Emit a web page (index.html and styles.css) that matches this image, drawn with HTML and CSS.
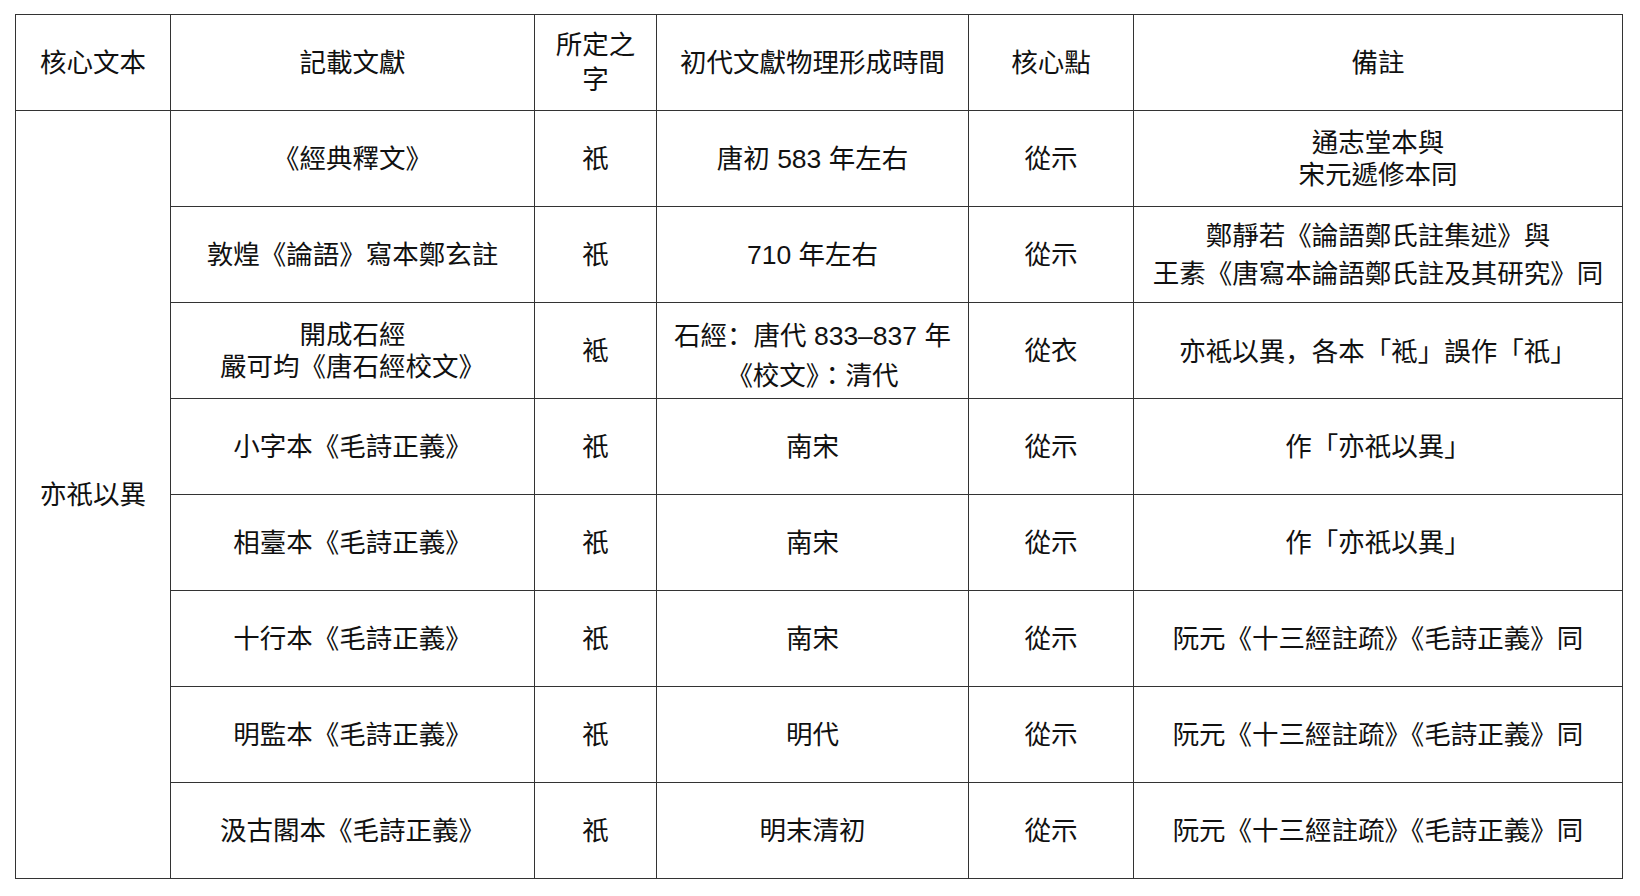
FILE: index.html
```html
<!DOCTYPE html>
<html lang="zh-Hant">
<head>
<meta charset="utf-8">
<title>亦祇以異</title>
<link rel="stylesheet" href="styles.css">
</head>
<body>
<table class="grid">
  <colgroup>
    <col class="c1">
    <col class="c2">
    <col class="c3">
    <col class="c4">
    <col class="c5">
    <col class="c6">
  </colgroup>
  <thead>
    <tr class="head">
      <th>核心文本</th>
      <th>記載文獻</th>
      <th class="lh35">所定之<br>字</th>
      <th>初代文獻物理形成時間</th>
      <th>核心點</th>
      <th>備註</th>
    </tr>
  </thead>
  <tbody>
    <tr>
      <td rowspan="8">亦祇以異</td>
      <td>《經典釋文》</td>
      <td>祇</td>
      <td>唐初 583 年左右</td>
      <td>從示</td>
      <td class="lh32">通志堂本與<br>宋元遞修本同</td>
    </tr>
    <tr>
      <td>敦煌《論語》寫本鄭玄註</td>
      <td>祇</td>
      <td>710 年左右</td>
      <td>從示</td>
      <td class="lh38">鄭靜若《論語鄭氏註集述》與<br>王素《唐寫本論語鄭氏註及其研究》同</td>
    </tr>
    <tr>
      <td class="lh32">開成石經<br>嚴可均《唐石經校文》</td>
      <td>袛</td>
      <td class="lh40 low">石經<span class="punct" lang="zh-Hans">：</span>唐代 833–837 年<br>《校文》：清代</td>
      <td>從衣</td>
      <td>亦袛以異<span class="punct" lang="zh-Hans">，</span>各本「袛」誤作「祇」</td>
    </tr>
    <tr>
      <td>小字本《毛詩正義》</td>
      <td>祇</td>
      <td>南宋</td>
      <td>從示</td>
      <td>作「亦祇以異」</td>
    </tr>
    <tr>
      <td>相臺本《毛詩正義》</td>
      <td>祇</td>
      <td>南宋</td>
      <td>從示</td>
      <td>作「亦祇以異」</td>
    </tr>
    <tr>
      <td>十行本《毛詩正義》</td>
      <td>祇</td>
      <td>南宋</td>
      <td>從示</td>
      <td>阮元《十三經註疏》《毛詩正義》同</td>
    </tr>
    <tr>
      <td>明監本《毛詩正義》</td>
      <td>祇</td>
      <td>明代</td>
      <td>從示</td>
      <td>阮元《十三經註疏》《毛詩正義》同</td>
    </tr>
    <tr>
      <td>汲古閣本《毛詩正義》</td>
      <td>祇</td>
      <td>明末清初</td>
      <td>從示</td>
      <td>阮元《十三經註疏》《毛詩正義》同</td>
    </tr>
  </tbody>
</table>
</body>
</html>
```

FILE: styles.css
```css
html, body {
  margin: 0;
  padding: 0;
  background: #ffffff;
}

.grid {
  margin: 14px 0 0 15px;
  border-collapse: collapse;
  table-layout: fixed;
  width: 1607px;
  font-family: "Liberation Sans", "Noto Sans CJK TC", sans-serif;
  font-size: 26.5px;
  color: #111111;
}

.c1 { width: 155px; }
.c2 { width: 364px; }
.c3 { width: 122px; }
.c4 { width: 312px; }
.c5 { width: 165px; }
.c6 { width: 489px; }

.grid th,
.grid td {
  border: 1px solid #333333;
  padding: 0 6px;
  text-align: center;
  vertical-align: middle;
  font-weight: 400;
  line-height: 34px;
  white-space: nowrap;
}

.grid tr {
  height: 96px;
}

.grid .head {
  height: 96px;
}

.grid .lh32 { line-height: 32px; }
.grid .lh35 { line-height: 35px; }
.grid .lh38 { line-height: 38px; }
.grid .lh40 { line-height: 40px; }
.grid .low { padding-top: 8px; }

.punct {
  font-family: "Noto Sans CJK SC", sans-serif;
}
```
